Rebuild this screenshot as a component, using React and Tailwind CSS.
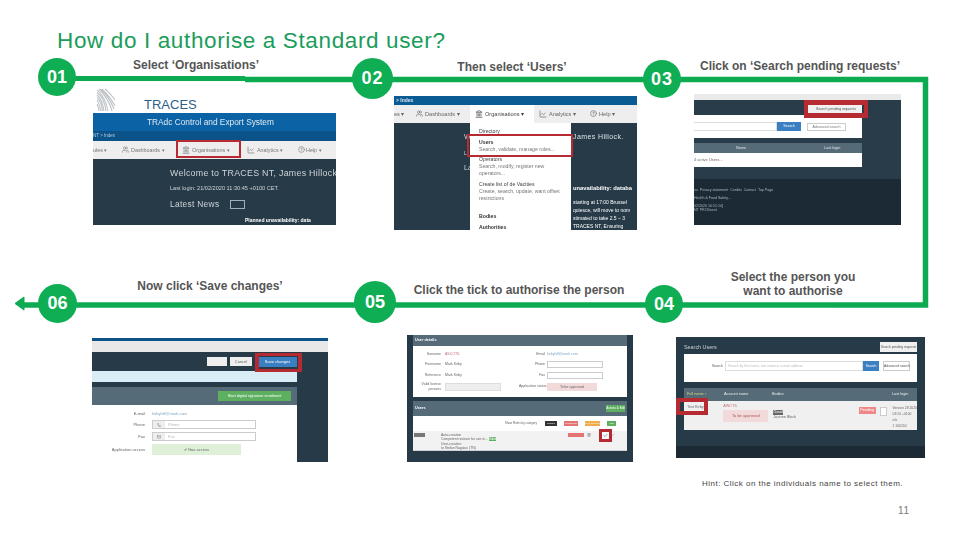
import { Landmark, ChartLine, CircleHelp, Users, Phone, Mail, Check, Trash2 } from 'lucide-react';

const Circle = ({ n, className }) => (
  <div className={`shrink-0 rounded-full bg-[#0fae55] text-white font-bold flex items-center justify-center text-[18px] ${className}`}>
    {n}
  </div>
);

const Label = ({ children, className }) => (
  <p className={`text-center text-[12px] leading-[14px] font-bold text-[#555] ${className}`}>{children}</p>
);

const RedBox = ({ className }) => <div className={`absolute border-[#b62b32] ${className}`} />;

const Pill = ({ className, children }) => (
  <span className={`block text-center text-[2.2px] leading-[5px] whitespace-nowrap ${className}`}>{children}</span>
);

const ShotOne = () => (
  <div className="relative w-[243px] h-[112px] overflow-hidden bg-[#263a47] blur-[0.3px]">
    <div className="h-[18px] bg-[#0b63a5] pl-[54px] text-[8.3px] leading-[18px] text-[#dfeaf3] whitespace-nowrap">TRAdc Control and Export System</div>
    <div className="h-[10px] bg-[#0a5288] text-[4.5px] leading-[10px] text-[#b8cfe0]">NT &gt; Index</div>
    <div className="h-[18px] bg-[#eeeeee] flex items-center text-[5.4px] text-[#777] whitespace-nowrap">
      <span className="w-[29px]">ules ▾</span>
      <span className="w-[59px] flex items-center gap-[2px]"><Users size={7} />Dashboards ▾</span>
      <span className="w-[66px] flex items-center gap-[2px] pl-[1px]"><Landmark size={8} />Organisations ▾</span>
      <span className="w-[51px] flex items-center gap-[2px]"><ChartLine size={8} />Analytics ▾</span>
      <span className="flex items-center gap-[1px]"><CircleHelp size={7} />Help ▾</span>
    </div>
    <div className="pl-[77px] pt-[9px] text-[#cfd6db]">
      <p className="text-[8.8px] leading-[10px] tracking-[0.3px] whitespace-nowrap">Welcome to TRACES NT, James Hillock</p>
      <p className="mt-[7px] text-[5.6px] leading-[6px] whitespace-nowrap">Last login: 21/02/2020 11:30:45 +0100 CET.</p>
      <div className="mt-[8px] flex items-center gap-[11px]">
        <span className="text-[8.4px] leading-[10px] tracking-[0.3px] whitespace-nowrap">Latest News</span>
        <span className="w-[15px] h-[9px] border border-[#9fb0bb]" />
      </div>
      <p className="ml-[75px] mt-[8px] text-[5px] leading-[6px] font-bold text-white whitespace-nowrap">Planned unavailability: data</p>
    </div>
    <RedBox className="left-[83px] top-[27px] w-[65px] h-[18px] border-[2.5px]" />
  </div>
);

const ShotTwo = () => (
  <div className="relative w-[243px] h-[134px] overflow-hidden bg-[#263a47] blur-[0.3px]">
    <div className="h-[9px] bg-[#0a5a94] text-[5px] leading-[9px] text-[#d5e3ee] pl-[2px] font-bold">&gt; Index</div>
    <div className="h-[18px] bg-[#eeeeee] flex items-center text-[5.6px] text-[#666] whitespace-nowrap">
      <span className="w-[22px]">es ▾</span>
      <span className="w-[54px] flex items-center gap-[2px]"><Users size={7} />Dashboards ▾</span>
      <span className="bg-white h-full w-[64px] flex items-center gap-[2px] pl-[5px] text-[#444]"><Landmark size={8} />Organisations ▾</span>
      <span className="w-[56px] pl-[5px] flex items-center gap-[2px]"><ChartLine size={8} />Analytics ▾</span>
      <span className="flex items-center gap-[2px]"><CircleHelp size={7} />Help ▾</span>
    </div>
    <div className="flex">
      <div className="w-[76px] pt-[9px] pl-[70px] text-[#cfd6db] text-[7px]">
        <p>W</p>
        <p className="mt-[7px] text-[5px]">L</p>
        <p className="mt-[6px]">La</p>
      </div>
      <div className="w-[101px] h-[107px] bg-white px-[9px] pt-[5px] text-[5.2px] leading-[7px] text-[#777]">
        <p className="text-[#444]">Directory</p>
        <p className="mt-[4px] text-[#333] font-bold">Users</p>
        <p className="whitespace-nowrap">Search, validate, manage roles...</p>
        <p className="mt-[3px] text-[#444]">Operators</p>
        <p>Search, modify, register new operators...</p>
        <p className="mt-[4px] text-[#444]">Create list of de Vacities</p>
        <p>Create, search, update, want offset restrictions</p>
        <p className="mt-[11px] text-[#333] font-bold">Bodies</p>
        <p className="mt-[4px] text-[#333] font-bold">Authorities</p>
      </div>
      <div className="pl-[2px] pt-[9px] text-[#dde3e7] whitespace-nowrap">
        <p className="text-[7px] leading-[9px] tracking-[0.4px]">James Hillock.</p>
        <p className="mt-[43px] text-[5.8px] leading-[8px] font-bold text-white">unavailability: databa</p>
        <div className="mt-[6px] text-[5px] leading-[8px] text-white">
          <p>starting at 17:00 Brussel</p>
          <p>quiesce, will move to nom</p>
          <p>stimated to take 2.5 – 3</p>
          <p>TRACES NT, Ensuring</p>
        </div>
      </div>
    </div>
    <RedBox className="left-[73px] top-[38px] w-[106px] h-[23px] border-[2.5px]" />
  </div>
);

const ShotThree = () => (
  <div className="relative w-[207px] h-[131px] overflow-hidden bg-[#283c49] blur-[0.3px]">
    <div className="h-[6px] bg-[#eaeaea]" />
    <div className="h-[79px] pt-[5px]">
      <div className="flex justify-end w-[168px]">
        <div className="w-[54px] h-[8px] bg-[#f0f0f0] text-[3.6px] leading-[8px] text-[#555] pl-[8px] whitespace-nowrap">Search pending requests</div>
      </div>
      <div className="mt-[2px] w-[168px] h-[23px] bg-white flex items-center">
        <div className="w-[83px] h-[9px] border-y border-r border-[#ddd]" />
        <div className="w-[24px] h-[9px] bg-[#3a7fc1] text-[3.6px] leading-[9px] text-white text-center">Search</div>
        <div className="ml-[6px] w-[39px] h-[8px] border border-[#ccc] text-[3.6px] leading-[6px] text-[#777] text-center whitespace-nowrap">Advanced search</div>
      </div>
      <div className="mt-[5px] w-[168px] h-[10px] bg-[#566b78] flex text-[3.8px] leading-[10px] text-[#dfe5e8]">
        <span className="ml-[42px]">Name</span>
        <span className="ml-[78px]">Last login</span>
      </div>
      <div className="w-[168px] h-[14px] bg-white text-[4px] leading-[14px] text-[#666]">4 active Users...</div>
    </div>
    <div className="h-[46px] bg-[#1b2a35] pt-[8px] text-[3.6px] leading-[4px] text-[#a9b7c0] whitespace-nowrap">
      <p className="leading-[6px]">es&nbsp; Privacy statement&nbsp; Credits&nbsp; Contact&nbsp; Top Page</p>
      <p className="mt-[2px] leading-[6px]">Health &amp; Food Safety...</p>
      <p className="mt-[3px]">02/2020 10:51:14]</p>
      <p>NT PRODnext</p>
    </div>
    <RedBox className="left-[110px] top-[6px] w-[64px] h-[18px] border-x-[4px] border-y-[5px]" />
  </div>
);

const ShotFour = () => (
  <div className="relative w-[249px] h-[121px] overflow-hidden bg-[#263a47] blur-[0.3px]">
    <div className="h-[109px] px-[8px] pt-[5px]">
      <div className="h-[12px] flex items-start justify-between">
        <span className="text-[5.4px] leading-[10px] text-[#c8d1d6]">Search Users</span>
        <span className="w-[37px] h-[10px] bg-[#f0f0f0] text-[3.2px] leading-[10px] text-[#555] text-center whitespace-nowrap">Search pending requests</span>
      </div>
      <div className="h-[28px] bg-white pt-[7px] flex items-start text-[3.4px] text-[#555]">
        <span className="ml-[28px] w-[13px] leading-[10px]">Search</span>
        <div className="w-[138px] h-[10px] border border-[#ddd] text-[#bbb] pl-[2px] leading-[8px] whitespace-nowrap">Search by first name, last name or e-mail address</div>
        <div className="w-[16px] h-[10px] bg-[#3a7fc1] text-white text-center leading-[10px]">Search</div>
        <div className="ml-[4px] w-[27px] h-[10px] border border-[#ccc] text-center leading-[8px] whitespace-nowrap">Advanced search</div>
      </div>
      <div className="mt-[6px] h-[13px] bg-[#566b78] flex text-[3.8px] leading-[13px] text-[#e5e9ec]">
        <span className="ml-[3px] w-[37px] text-[#d9d27a]">Full name ↕</span>
        <span className="w-[48px]">Account name</span>
        <span className="w-[120px]">Bodies</span>
        <span>Last login</span>
      </div>
      <div className="h-[29px] bg-[#f0f0f0] flex text-[3.8px] text-[#666]">
        <span className="ml-[3px] w-[37px] pt-[3px] leading-[6px]">Test Kirby</span>
        <div className="w-[51px] pt-[3px] leading-[5px] text-[#c46a7a]">
          <p>AWCTIL</p>
          <div className="mt-[1px] w-[45px] h-[12px] bg-[#f2d9da] text-[4px] leading-[12px] text-center text-[#a55]">To be approved</div>
        </div>
        <div className="w-[87px] pt-[9px] leading-[5px]">
          <span className="block w-[10px] h-[5px] bg-[#666] text-[3px] text-white">Closed</span>
          <p>Joanne Block</p>
        </div>
        <span className="w-[17px] h-[7px] mt-[6px] bg-[#e88] text-white leading-[7px] text-center">Pending</span>
        <span className="ml-[4px] mt-[6px] w-[7px] h-[9px] border border-[#ccc] bg-white" />
        <div className="ml-[6px] pt-[4px] leading-[6px] text-[3.4px] whitespace-nowrap">
          <p>Version 28 2020</p>
          <p>03:24 +0100</p>
          <p>n/a</p>
          <p>1 100150</p>
        </div>
      </div>
    </div>
    <div className="h-[12px] bg-[#1b2a35]" />
    <RedBox className="left-0 top-[61px] w-[32px] h-[17px] border-[4px]" />
  </div>
);

const ShotFive = () => (
  <div className="relative w-[226px] h-[127px] overflow-hidden bg-[#263a47] blur-[0.3px] px-[6px]">
    <div className="h-[11px] bg-[#566b78] text-[3.8px] leading-[11px] text-white pl-[2px] font-bold">User details</div>
    <div className="h-[51px] bg-white grid grid-cols-[106px_1fr] grid-rows-[10.5px_10.5px_10.5px_12px] pt-[3px] text-[3.5px] leading-[5px] text-[#666]">
      <div className="flex items-center gap-[4px]"><span className="w-[28px] text-right">Surname</span><span className="text-[#c46a7a]">ASCOTIL</span></div>
      <div className="flex items-center gap-[2px]"><span className="w-[26px] text-right">Email</span><span className="text-[#7aa9c9] whitespace-nowrap">kirbyhill@mark.com</span></div>
      <div className="flex items-center gap-[4px]"><span className="w-[28px] text-right">Forename</span><span>Mark Kirby</span></div>
      <div className="flex items-center gap-[2px]"><span className="w-[26px] text-right">Phone</span><span className="w-[56px] h-[7px] border border-[#ccc]" /></div>
      <div className="flex items-center gap-[4px]"><span className="w-[28px] text-right">Reference</span><span>Mark Kirby</span></div>
      <div className="flex items-center gap-[2px]"><span className="w-[26px] text-right">Fax</span><span className="w-[56px] h-[7px] border border-[#ccc]" /></div>
      <div className="flex items-center gap-[4px]"><span className="w-[28px] text-right">Valid license persons</span><span className="w-[56px] h-[8px] bg-[#eee] border border-[#ddd]" /></div>
      <div className="flex items-center gap-[2px]"><span className="w-[26px] text-right whitespace-nowrap">Application status</span><span className="w-[50px] h-[8px] bg-[#f2d9da] text-center leading-[8px]">To be approved</span></div>
    </div>
    <div className="mt-[4px] h-[15px] bg-[#566b78] flex items-center justify-between text-[3.8px] text-white px-[2px]">
      <span className="font-bold">Users</span>
      <span className="w-[19px] h-[7px] bg-[#5cb060] leading-[7px] text-center whitespace-nowrap text-[3px]">Actions &amp; Edit</span>
    </div>
    <div className="h-[35px] bg-[#f2f2f2] text-[3.4px] text-[#666] border-b border-[#cdd3d7]">
      <div className="h-[15px] bg-white flex items-center justify-end gap-[7px] pr-[11px]">
        <span className="text-[3px] whitespace-nowrap mr-[1px]">Show Roles by category</span>
        <Pill className="w-[12px] bg-[#333] text-white">Granted</Pill>
        <Pill className="w-[14px] bg-[#e57373] text-white">Pending list</Pill>
        <Pill className="w-[15px] bg-[#f0ad4e] text-white">To be approved</Pill>
        <Pill className="w-[9px] bg-[#5cb060] text-white">Valid</Pill>
      </div>
      <div className="flex pt-[2px]">
        <span className="w-[11px] h-[4px] bg-[#777] shrink-0 ml-[1px]" />
        <div className="ml-[16px] w-[122px] leading-[4px]">
          <p>Auto-creation</p>
          <p className="whitespace-nowrap">Competent reviews for use in... <span className="bg-[#5cb060] text-white">Valid</span></p>
          <p className="mt-[1px]">User-creation</p>
          <p>to Stefan Ragatoc (TN)</p>
        </div>
        <span className="ml-[5px] h-[4px] w-[16px] bg-[#e57373]" />
        <Trash2 size={4} className="ml-[3px]" />
        <Check size={4} className="ml-[20px]" />
      </div>
    </div>
    <div className="absolute left-[192px] top-[94px] w-[13px] h-[13px] bg-white border-[3px] border-[#b62b32] flex items-center justify-center">
      <Check size={5} strokeWidth={3} className="text-[#555]" />
    </div>
  </div>
);

const ShotSix = () => (
  <div className="relative w-[236px] h-[124px] overflow-hidden bg-[#263a47] blur-[0.3px]">
    <div className="h-[3px] bg-[#0a5288]" />
    <div className="h-[11px] bg-[#e8e8e8]" />
    <div className="h-[19px] w-[205px] flex items-center justify-end gap-[2px] text-[4px]">
      <span className="w-[20px] h-[9px] bg-[#eee] mr-[1px]" />
      <span className="w-[22px] h-[9px] bg-[#eee] leading-[9px] text-center text-[#666]">Cancel</span>
      <span className="ml-[4px] w-[39px] h-[10px] bg-[#3a7fc1] leading-[10px] text-center text-white whitespace-nowrap">Save changes</span>
    </div>
    <div className="h-[11px] w-[205px] bg-[#d9edf7]" />
    <div className="mt-[5px] h-[18px] w-[205px] bg-[#566b78] flex items-center justify-end pr-[6px]">
      <span className="w-[73px] h-[10px] bg-[#5cb060] text-[3.8px] leading-[10px] text-white text-center whitespace-nowrap">Start digital signature enrolment</span>
    </div>
    <div className="h-[57px] w-[205px] bg-white pt-[6px] text-[4px] text-[#666] flex flex-col gap-[3px]">
      <div className="flex items-center gap-[7px]">
        <span className="w-[53px] text-right">E-mail</span>
        <span className="text-[#7aa9c9]">kirbyhill@mark.com</span>
      </div>
      <div className="flex items-center gap-[7px]">
        <span className="w-[53px] text-right">Phone</span>
        <span className="w-[104px] h-[9px] border border-[#ccc] flex items-center leading-[7px] text-[#bbb]">
          <span className="w-[12px] h-full bg-[#eee] flex items-center justify-center mr-[3px]"><Phone size={4} className="text-[#666]" /></span>Phone
        </span>
      </div>
      <div className="flex items-center gap-[7px]">
        <span className="w-[53px] text-right">Fax</span>
        <span className="w-[104px] h-[9px] border border-[#ccc] flex items-center leading-[7px] text-[#bbb]">
          <span className="w-[12px] h-full bg-[#eee] flex items-center justify-center mr-[3px]"><Mail size={4} className="text-[#666]" /></span>Fax
        </span>
      </div>
      <div className="flex items-center gap-[7px]">
        <span className="w-[53px] text-right whitespace-nowrap">Application access</span>
        <span className="w-[89px] h-[11px] bg-[#dff0d8] text-center leading-[11px]">✔ Has access</span>
      </div>
    </div>
    <RedBox className="left-[163px] top-[15px] w-[47px] h-[19px] border-x-[4px] border-y-[3.5px]" />
  </div>
);

// connector between the numbered circles
const Wire = () => (
  <svg className="absolute left-0 top-0" width="960" height="540" fill="none" stroke="#0cab52">
    <path d="M60 78.5H245" strokeWidth="5" />
    <path d="M245 79.5H925.5V305H832" strokeWidth="5.5" />
    <path d="M832 305H20" strokeWidth="5.5" />
    <path d="M15 303.5L24 297V310Z" fill="#0cab52" strokeWidth="1" />
  </svg>
);

export default function App() {
  return (
    <div className="relative w-[960px] h-[540px] overflow-hidden bg-white font-['Liberation_Sans',Arial,sans-serif]">
      <Wire />
      <div className="relative">
        <h1 className="pl-[57px] pt-[28px] h-[58px] text-[22.5px] leading-[25px] tracking-[0.63px] text-[#1a9c5a]">
          How do I authorise a Standard user?
        </h1>

        <div className="grid grid-cols-[314px_291px_317px] ml-[38px] h-[220px]">
          <div>
            <div className="flex items-start h-[30px]">
              <Circle n="01" className="w-[38px] h-[38px]" />
              <Label className="ml-[17px] w-[206px]">Select ‘Organisations’</Label>
            </div>
            <div className="ml-[58px] h-[25px] flex items-start">
              <svg width="20" height="24" viewBox="0 0 20 24" stroke="#bfc4c8" strokeWidth="1.1" fill="none">
                <path d="M1 2C6 6 10 12 12 23M3 1C8 6 13 12 16 23M6 1C10 5 15 10 19 18M1 7C5 10 7 16 8 23M1 12C3 15 4 19 5 23M9 1C13 4 16 8 19 12M1 4.500C6 8 9 15 10 23M1 9.500C4 12 6 18 6.500 23M4.500 1C9 5 14 11 18 21M1 16C2 18 3 21 3 23" />
              </svg>
              <span className="ml-[28px] mt-[8px] text-[13px] leading-[17px] text-[#2f6089]">TRACES</span>
            </div>
            <div className="ml-[55px]"><ShotOne /></div>
          </div>

          <div>
            <div className="flex items-start h-[38px]">
              <Circle n="02" className="w-[41px] h-[41px] tracking-[1px]" />
              <Label className="w-[238px] pt-[2px]">Then select ‘Users’</Label>
            </div>
            <div className="ml-[42px]"><ShotTwo /></div>
          </div>

          <div>
            <div className="flex items-start h-[36px]">
              <Circle n="03" className="w-[38px] h-[38px] mt-[2px] tracking-[1px]" />
              <Label className="w-[238px] pt-[1px]">Click on ‘Search pending requests’</Label>
            </div>
            <div className="ml-[51px]"><ShotThree /></div>
          </div>
        </div>

        <div className="grid grid-cols-[314px_291px_317px] ml-[38px]">
          <div>
            <div className="flex items-start h-[60px]">
              <Circle n="06" className="w-[39px] h-[39px] mt-[6px]" />
              <Label className="w-[266px] pt-[1px]">Now click ‘Save changes’</Label>
            </div>
            <div className="ml-[54px]"><ShotSix /></div>
          </div>

          <div>
            <div className="flex items-start h-[57px]">
              <Circle n="05" className="w-[42px] h-[42px] mt-[3px] ml-[2px]" />
              <Label className="w-[246px] pt-[5px]">Click the tick to authorise the person</Label>
            </div>
            <div className="ml-[55px]"><ShotFive /></div>
          </div>

          <div>
            <div className="flex items-start h-[59px]">
              <Circle n="04" className="w-[38px] h-[38px] mt-[7px] ml-[2px]" />
              <Label className="w-[220px] -mt-[8px]">Select the person you<br />want to authorise</Label>
            </div>
            <div className="ml-[33px]"><ShotFour /></div>
            <p className="ml-[59px] mt-[21px] text-[8px] leading-[10px] tracking-[0.48px] text-[#444] whitespace-nowrap">
              Hint: Click on the individuals name to select them.
            </p>
            <p className="ml-[255px] mt-[16px] text-[10px] leading-[12px] tracking-[0.6px] text-[#777]">11</p>
          </div>
        </div>
      </div>
    </div>
  );
}
